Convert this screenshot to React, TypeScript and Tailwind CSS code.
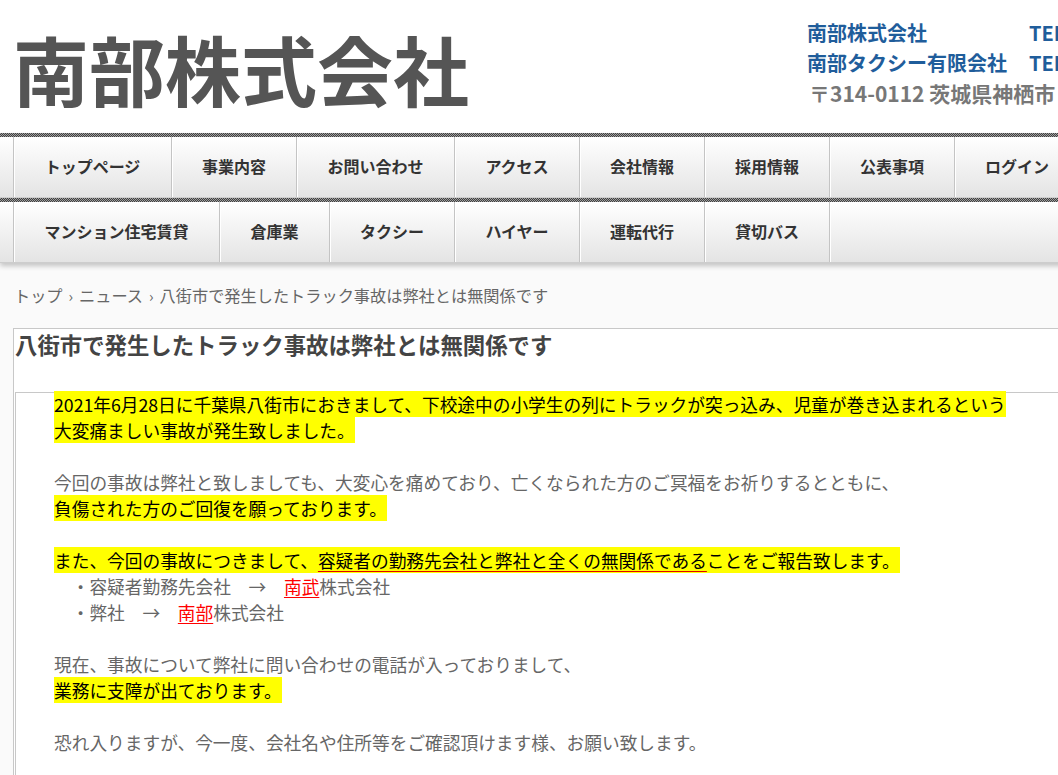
import React from "react";

const row1: [string, string][] = [
  ["トップページ", "w-[158px]"],
  ["事業内容", "w-[125px]"],
  ["お問い合わせ", "w-[158px]"],
  ["アクセス", "w-[125px]"],
  ["会社情報", "w-[125px]"],
  ["採用情報", "w-[125px]"],
  ["公表事項", "w-[125px]"],
  ["ログイン", "w-[125px]"],
];
const row2: [string, string][] = [
  ["マンション住宅賃貸", "w-[206px]"],
  ["倉庫業", "w-[110px]"],
  ["タクシー", "w-[125px]"],
  ["ハイヤー", "w-[125px]"],
  ["運転代行", "w-[125px]"],
  ["貸切バス", "w-[125px]"],
];

const SP = "\u3000";

function Stripe() {
  return (
    <div className="h-[4px] w-full bg-[image:repeating-conic-gradient(#3f3f3f_0%_25%,#a0a0a0_0%_50%)] bg-[length:2px_2px]" />
  );
}

function NavRow({ items }: { items: [string, string][] }) {
  return (
    <div className="flex h-[61px] w-[1200px] pl-[13px] border-b border-[#cdcdcd] bg-gradient-to-b from-white to-[#e4e4e4]">
      {items.map(([t, w]) => (
        <div
          key={t}
          className={
            w +
            " shrink-0 flex items-center justify-center pb-[2px] border-l border-[#c4c4c4] text-[16px] font-bold text-[#333] whitespace-nowrap shadow-[inset_1px_0_0_#ffffff]"
          }
        >
          {t}
        </div>
      ))}
      <div className="flex-1 border-l border-[#c4c4c4] shadow-[inset_1px_0_0_#ffffff]" />
    </div>
  );
}

export default function App() {
  return (
    <div className="w-[1058px] min-h-[775px] overflow-hidden bg-[#fafafa] font-['Noto_Sans_CJK_JP',sans-serif]">
      {/* Header */}
      <div className="flex h-[133px] w-[1200px] bg-white">
        <div className="w-[807px] shrink-0 pl-[13px] pt-[14px]">
          <div className="text-[76px] font-bold leading-[108px] text-[#555] whitespace-nowrap">
            南部株式会社
          </div>
        </div>
        <div className="pt-[18px] text-[20px] font-bold leading-[30px] whitespace-nowrap">
          <div className="grid grid-cols-[222px_auto] text-[#1f5d9b]">
            <span>南部株式会社</span>
            <span>TEL</span>
            <span>南部タクシー有限会社</span>
            <span>TEL</span>
          </div>
          <div className="text-[21px] text-[#777] pl-[2px]">〒314-0112 茨城県神栖市</div>
        </div>
      </div>

      {/* Navigation */}
      <div className="relative w-[1200px] shadow-[0_3px_5px_rgba(0,0,0,0.22)]">
        <Stripe />
        <NavRow items={row1} />
        <Stripe />
        <NavRow items={row2} />
      </div>

      {/* Breadcrumb */}
      <div className="mt-[20px] pl-[14px] text-[16.2px] leading-[24px] text-[#666] whitespace-nowrap">
        トップ<span className="mx-[6px] text-[15px]">›</span>ニュース
        <span className="mx-[6px] text-[15px]">›</span>
        八街市で発生したトラック事故は弊社とは無関係です
      </div>

      {/* Article */}
      <div className="ml-[13px] mt-[20px] w-[1200px] border-l border-t border-[#c8c8c8] bg-white">
        <h1 className="pl-[1px] text-[22.4px] font-bold leading-[30px] text-[#444] whitespace-nowrap">
          八街市で発生したトラック事故は弊社とは無関係です
        </h1>
        <div className="ml-[1px] mt-[33px] border-l border-t border-[#c8c8c8] bg-white pl-[38px] pb-[40px] text-[17.7px] leading-[26px] text-[#666] whitespace-nowrap">
          <div className="-mt-[2px]">
            <span className="bg-[#ffff00] text-black">
              2021年6月28日に千葉県八街市におきまして、下校途中の小学生の列にトラックが突っ込み、児童が巻き込まれるという
            </span>
            <br />
            <span className="bg-[#ffff00] text-black">大変痛ましい事故が発生致しました。</span>
            <br />
            <br />
            今回の事故は弊社と致しましても、大変心を痛めており、亡くなられた方のご冥福をお祈りするとともに、
            <br />
            <span className="bg-[#ffff00] text-black">負傷された方のご回復を願っております。</span>
            <br />
            <br />
            <span className="bg-[#ffff00] text-black">
              また、今回の事故につきまして、
              <span className="underline decoration-[#e00000] underline-offset-[3px]">
                容疑者の勤務先会社と弊社と全くの無関係である
              </span>
              ことをご報告致します。
            </span>
            <br />
            {SP + "・容疑者勤務先会社" + SP + "→" + SP}
            <span className="text-[#ff0000] underline decoration-[#ff0000] underline-offset-[3px]">南武</span>
            株式会社
            <br />
            {SP + "・弊社" + SP + "→" + SP}
            <span className="text-[#ff0000] underline decoration-[#ff0000] underline-offset-[3px]">南部</span>
            株式会社
            <br />
            <br />
            現在、事故について弊社に問い合わせの電話が入っておりまして、
            <br />
            <span className="bg-[#ffff00] text-black">業務に支障が出ております。</span>
            <br />
            <br />
            恐れ入りますが、今一度、会社名や住所等をご確認頂けます様、お願い致します。
          </div>
        </div>
      </div>
    </div>
  );
}
